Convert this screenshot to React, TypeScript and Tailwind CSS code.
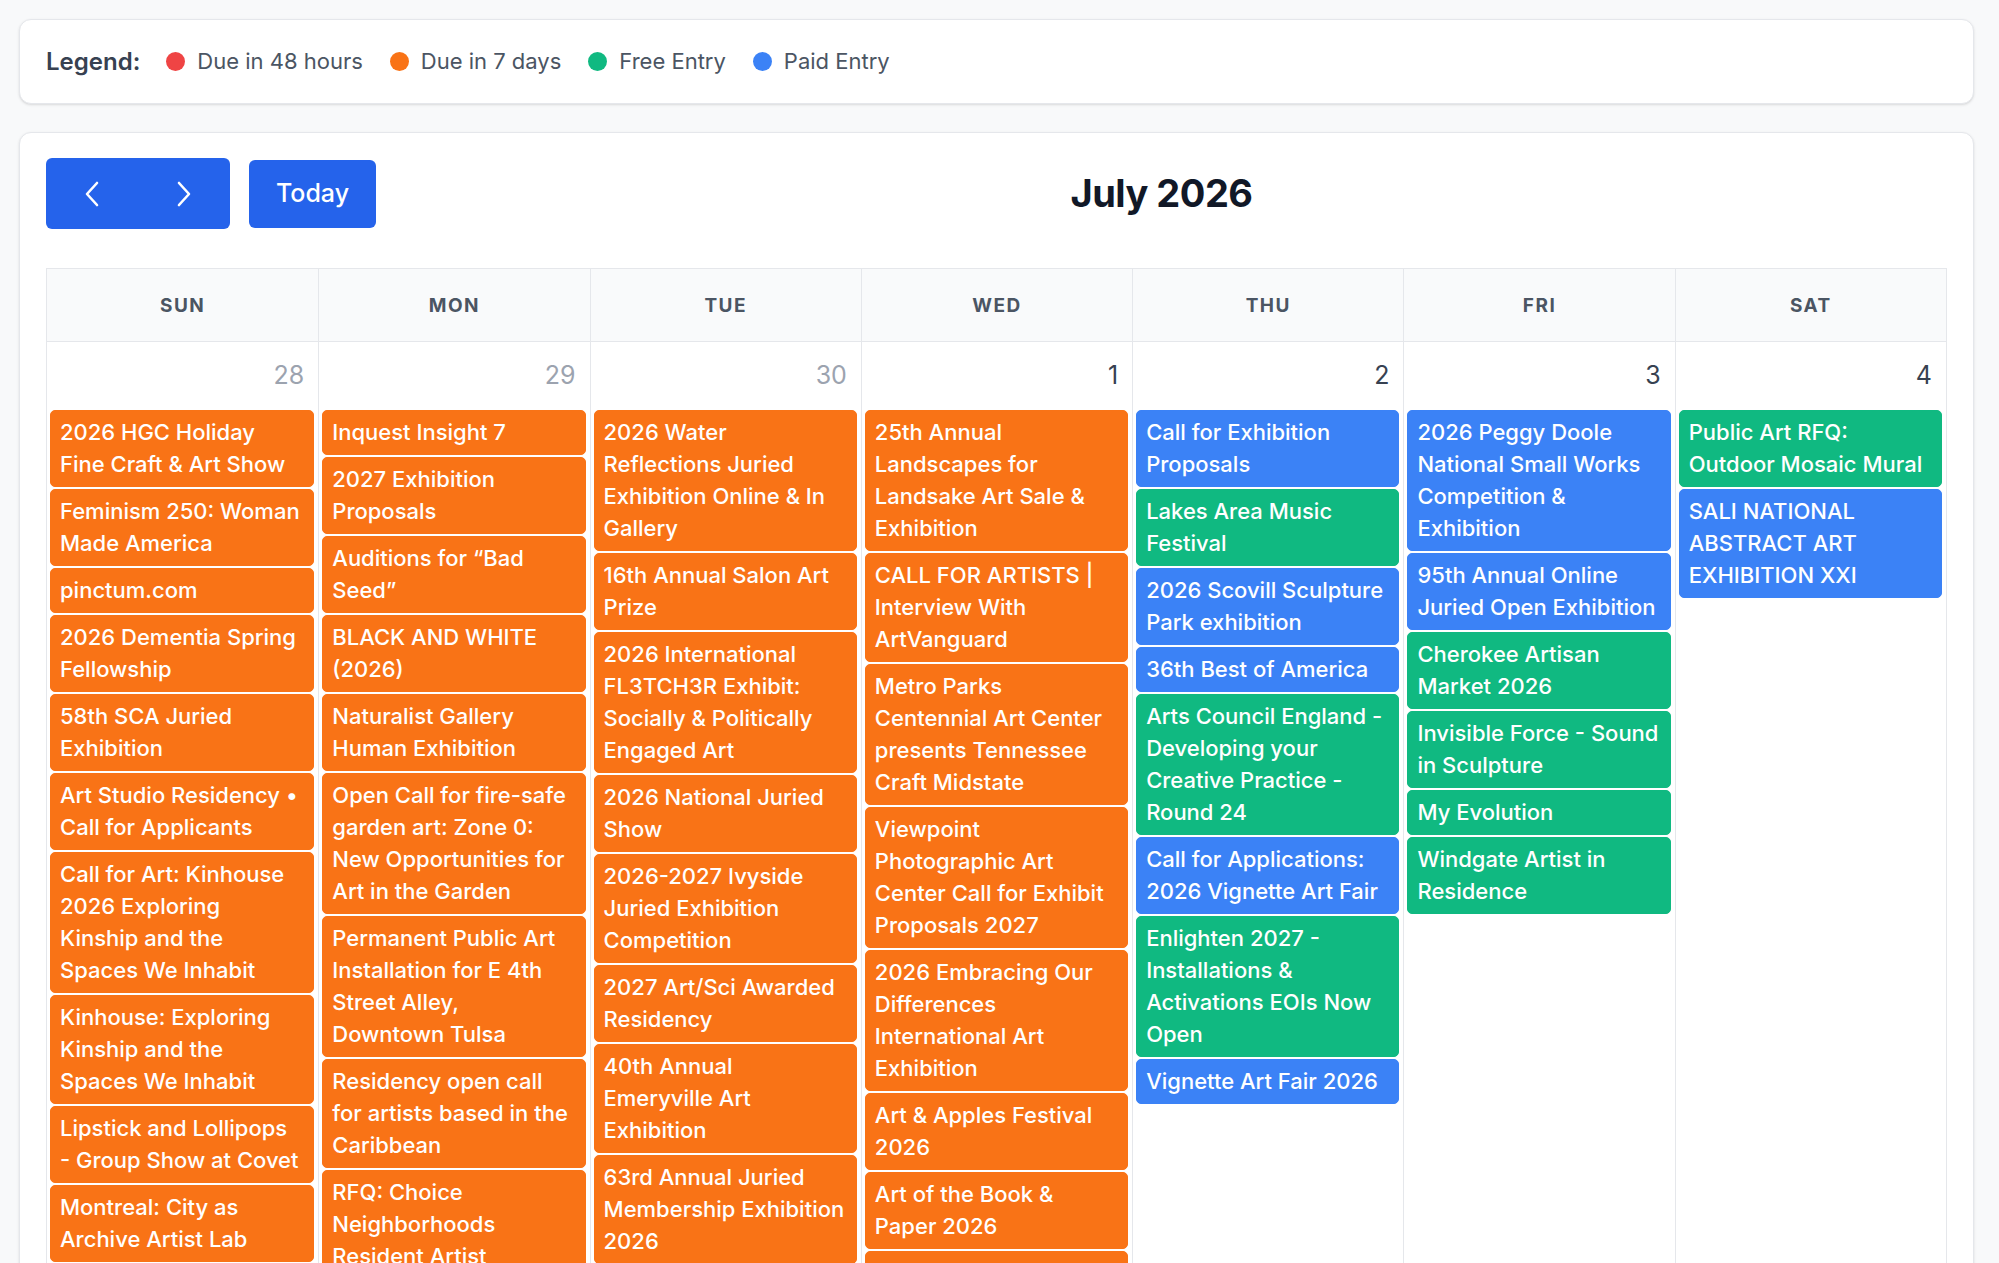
import React from "react";

type Tone = "o" | "g" | "b";

interface CalEvent {
    lines: string[];
    tone: Tone;
}

interface Day {
    num: number;
    muted: boolean;
    events: CalEvent[];
}

const toneClass: Record<Tone, string> = {
    o: "bg-[#f97316] border-[#f97316]",
    g: "bg-[#10b981] border-[#10b981]",
    b: "bg-[#3b82f6] border-[#3b82f6]",
};

const ev = (tone: Tone, ...lines: string[]): CalEvent => ({ tone, lines });

const weekdays = ["SUN", "MON", "TUE", "WED", "THU", "FRI", "SAT"];

const days: Day[] = [
    {
        num: 28,
        muted: true,
        events: [
            ev("o", "2026 HGC Holiday", "Fine Craft & Art Show"),
            ev("o", "Feminism 250: Woman", "Made America"),
            ev("o", "pinctum.com"),
            ev("o", "2026 Dementia Spring", "Fellowship"),
            ev("o", "58th SCA Juried", "Exhibition"),
            ev("o", "Art Studio Residency •", "Call for Applicants"),
            ev("o", "Call for Art: Kinhouse", "2026 Exploring", "Kinship and the", "Spaces We Inhabit"),
            ev("o", "Kinhouse: Exploring", "Kinship and the", "Spaces We Inhabit"),
            ev("o", "Lipstick and Lollipops", "- Group Show at Covet"),
            ev("o", "Montreal: City as", "Archive Artist Lab"),
        ],
    },
    {
        num: 29,
        muted: true,
        events: [
            ev("o", "Inquest Insight 7"),
            ev("o", "2027 Exhibition", "Proposals"),
            ev("o", "Auditions for “Bad", "Seed”"),
            ev("o", "BLACK AND WHITE", "(2026)"),
            ev("o", "Naturalist Gallery", "Human Exhibition"),
            ev("o", "Open Call for fire-safe", "garden art: Zone 0:", "New Opportunities for", "Art in the Garden"),
            ev("o", "Permanent Public Art", "Installation for E 4th", "Street Alley,", "Downtown Tulsa"),
            ev("o", "Residency open call", "for artists based in the", "Caribbean"),
            ev("o", "RFQ: Choice", "Neighborhoods", "Resident Artist"),
        ],
    },
    {
        num: 30,
        muted: true,
        events: [
            ev("o", "2026 Water", "Reflections Juried", "Exhibition Online & In", "Gallery"),
            ev("o", "16th Annual Salon Art", "Prize"),
            ev("o", "2026 International", "FL3TCH3R Exhibit:", "Socially & Politically", "Engaged Art"),
            ev("o", "2026 National Juried", "Show"),
            ev("o", "2026-2027 Ivyside", "Juried Exhibition", "Competition"),
            ev("o", "2027 Art/Sci Awarded", "Residency"),
            ev("o", "40th Annual", "Emeryville Art", "Exhibition"),
            ev("o", "63rd Annual Juried", "Membership Exhibition", "2026"),
        ],
    },
    {
        num: 1,
        muted: false,
        events: [
            ev("o", "25th Annual", "Landscapes for", "Landsake Art Sale &", "Exhibition"),
            ev("o", "CALL FOR ARTISTS |", "Interview With", "ArtVanguard"),
            ev("o", "Metro Parks", "Centennial Art Center", "presents Tennessee", "Craft Midstate"),
            ev("o", "Viewpoint", "Photographic Art", "Center Call for Exhibit", "Proposals 2027"),
            ev("o", "2026 Embracing Our", "Differences", "International Art", "Exhibition"),
            ev("o", "Art & Apples Festival", "2026"),
            ev("o", "Art of the Book &", "Paper 2026"),
            ev("o", "Call for Entries"),
        ],
    },
    {
        num: 2,
        muted: false,
        events: [
            ev("b", "Call for Exhibition", "Proposals"),
            ev("g", "Lakes Area Music", "Festival"),
            ev("b", "2026 Scovill Sculpture", "Park exhibition"),
            ev("b", "36th Best of America"),
            ev("g", "Arts Council England -", "Developing your", "Creative Practice -", "Round 24"),
            ev("b", "Call for Applications:", "2026 Vignette Art Fair"),
            ev("g", "Enlighten 2027 -", "Installations &", "Activations EOIs Now", "Open"),
            ev("b", "Vignette Art Fair 2026"),
        ],
    },
    {
        num: 3,
        muted: false,
        events: [
            ev("b", "2026 Peggy Doole", "National Small Works", "Competition &", "Exhibition"),
            ev("b", "95th Annual Online", "Juried Open Exhibition"),
            ev("g", "Cherokee Artisan", "Market 2026"),
            ev("g", "Invisible Force - Sound", "in Sculpture"),
            ev("g", "My Evolution"),
            ev("g", "Windgate Artist in", "Residence"),
        ],
    },
    {
        num: 4,
        muted: false,
        events: [
            ev("g", "Public Art RFQ:", "Outdoor Mosaic Mural"),
            ev("b", "SALI NATIONAL", "ABSTRACT ART", "EXHIBITION XXI"),
        ],
    },
];

const legend = [
    { label: "Due in 48 hours", dot: "bg-[#ef4444]" },
    { label: "Due in 7 days", dot: "bg-[#f97316]" },
    { label: "Free Entry", dot: "bg-[#10b981]" },
    { label: "Paid Entry", dot: "bg-[#3b82f6]" },
];

function Chevron({ dir }: { dir: "left" | "right" }) {
    return (
        <svg width="16" height="26" viewBox="0 0 16 26" fill="none" stroke="white" strokeWidth="2.6" strokeLinecap="round" strokeLinejoin="round">
            {dir === "left" ? <path d="M13 2 L3 13 L13 24" /> : <path d="M3 2 L13 13 L3 24" />}
        </svg>
    );
}

export default function App() {
    return (
        <div className="min-h-screen bg-[#f8f9fa] pl-[19px] pr-[25px] pt-[19px] pb-[19px] font-['Inter','Liberation_Sans',sans-serif]">
            {/* legend */}
            <div className="flex h-[85px] items-center rounded-[12px] border border-[#e5e7eb] bg-white px-[26px] shadow-sm">
                <span className="mr-[26px] text-[24px] font-semibold text-[#374151]">Legend:</span>
                <div className="flex items-center gap-[27px]">
                    {legend.map((l) => (
                        <div key={l.label} className="flex items-center gap-[12px]">
                            <span className={`h-[19px] w-[19px] rounded-full ${l.dot}`} />
                            <span className="text-[22px] text-[#4b5563]">{l.label}</span>
                        </div>
                    ))}
                </div>
            </div>

            {/* calendar */}
            <div className="mt-[28px] rounded-[12px] border border-[#e5e7eb] bg-white px-[26px] pt-[25px] pb-[26px] shadow-sm">
                <div className="flex h-[71px] items-center justify-between">
                    <div className="flex h-full items-center gap-[19px]">
                        <div className="flex h-[71px] w-[184px] overflow-hidden rounded-[6px] bg-[#2563eb]">
                            <button className="flex flex-1 items-center justify-center">
                                <Chevron dir="left" />
                            </button>
                            <button className="flex flex-1 items-center justify-center">
                                <Chevron dir="right" />
                            </button>
                        </div>
                        <button className="h-[68px] w-[127px] rounded-[6px] bg-[#2563eb] text-[25px] font-medium text-white">
                            Today
                        </button>
                    </div>
                    <h2 className="text-[38px] font-bold tracking-[-0.5px] text-[#111827]">July 2026</h2>
                    <div />
                </div>

                <div className="mt-[39px] border border-[#e5e7eb]">
                    <div className="grid grid-cols-7 border-b border-[#e5e7eb] bg-[#f9fafb]">
                        {weekdays.map((d, i) => (
                            <div
                                key={d}
                                className={`flex h-[72px] items-center justify-center pt-[2px] text-[19px] font-bold tracking-[1.5px] text-[#4b5563] ${i > 0 ? "border-l border-[#e5e7eb]" : ""}`}
                            >
                                {d}
                            </div>
                        ))}
                    </div>
                    <div className="grid grid-cols-7">
                        {days.map((day, i) => (
                            <div key={day.num} className={`pb-[8px] ${i > 0 ? "border-l border-[#e5e7eb]" : ""}`}>
                                <div
                                    className={`pt-[14px] pr-[14px] text-right text-[25px] leading-[38px] ${day.muted ? "text-[#9ca3af]" : "text-[#374151]"}`}
                                >
                                    {day.num}
                                </div>
                                <div className="mt-[16px] ml-[3px] mr-[4px] flex flex-col gap-[2px]">
                                    {day.events.map((e, j) => (
                                        <div
                                            key={j}
                                            className={`overflow-hidden whitespace-nowrap rounded-[5px] border px-[9px] pt-[5px] pb-[6px] text-[22px] font-medium leading-[32px] text-white ${toneClass[e.tone]}`}
                                        >
                                            {e.lines.map((line, k) => (
                                                <div key={k}>{line}</div>
                                            ))}
                                        </div>
                                    ))}
                                </div>
                            </div>
                        ))}
                    </div>
                </div>
            </div>
        </div>
    );
}
